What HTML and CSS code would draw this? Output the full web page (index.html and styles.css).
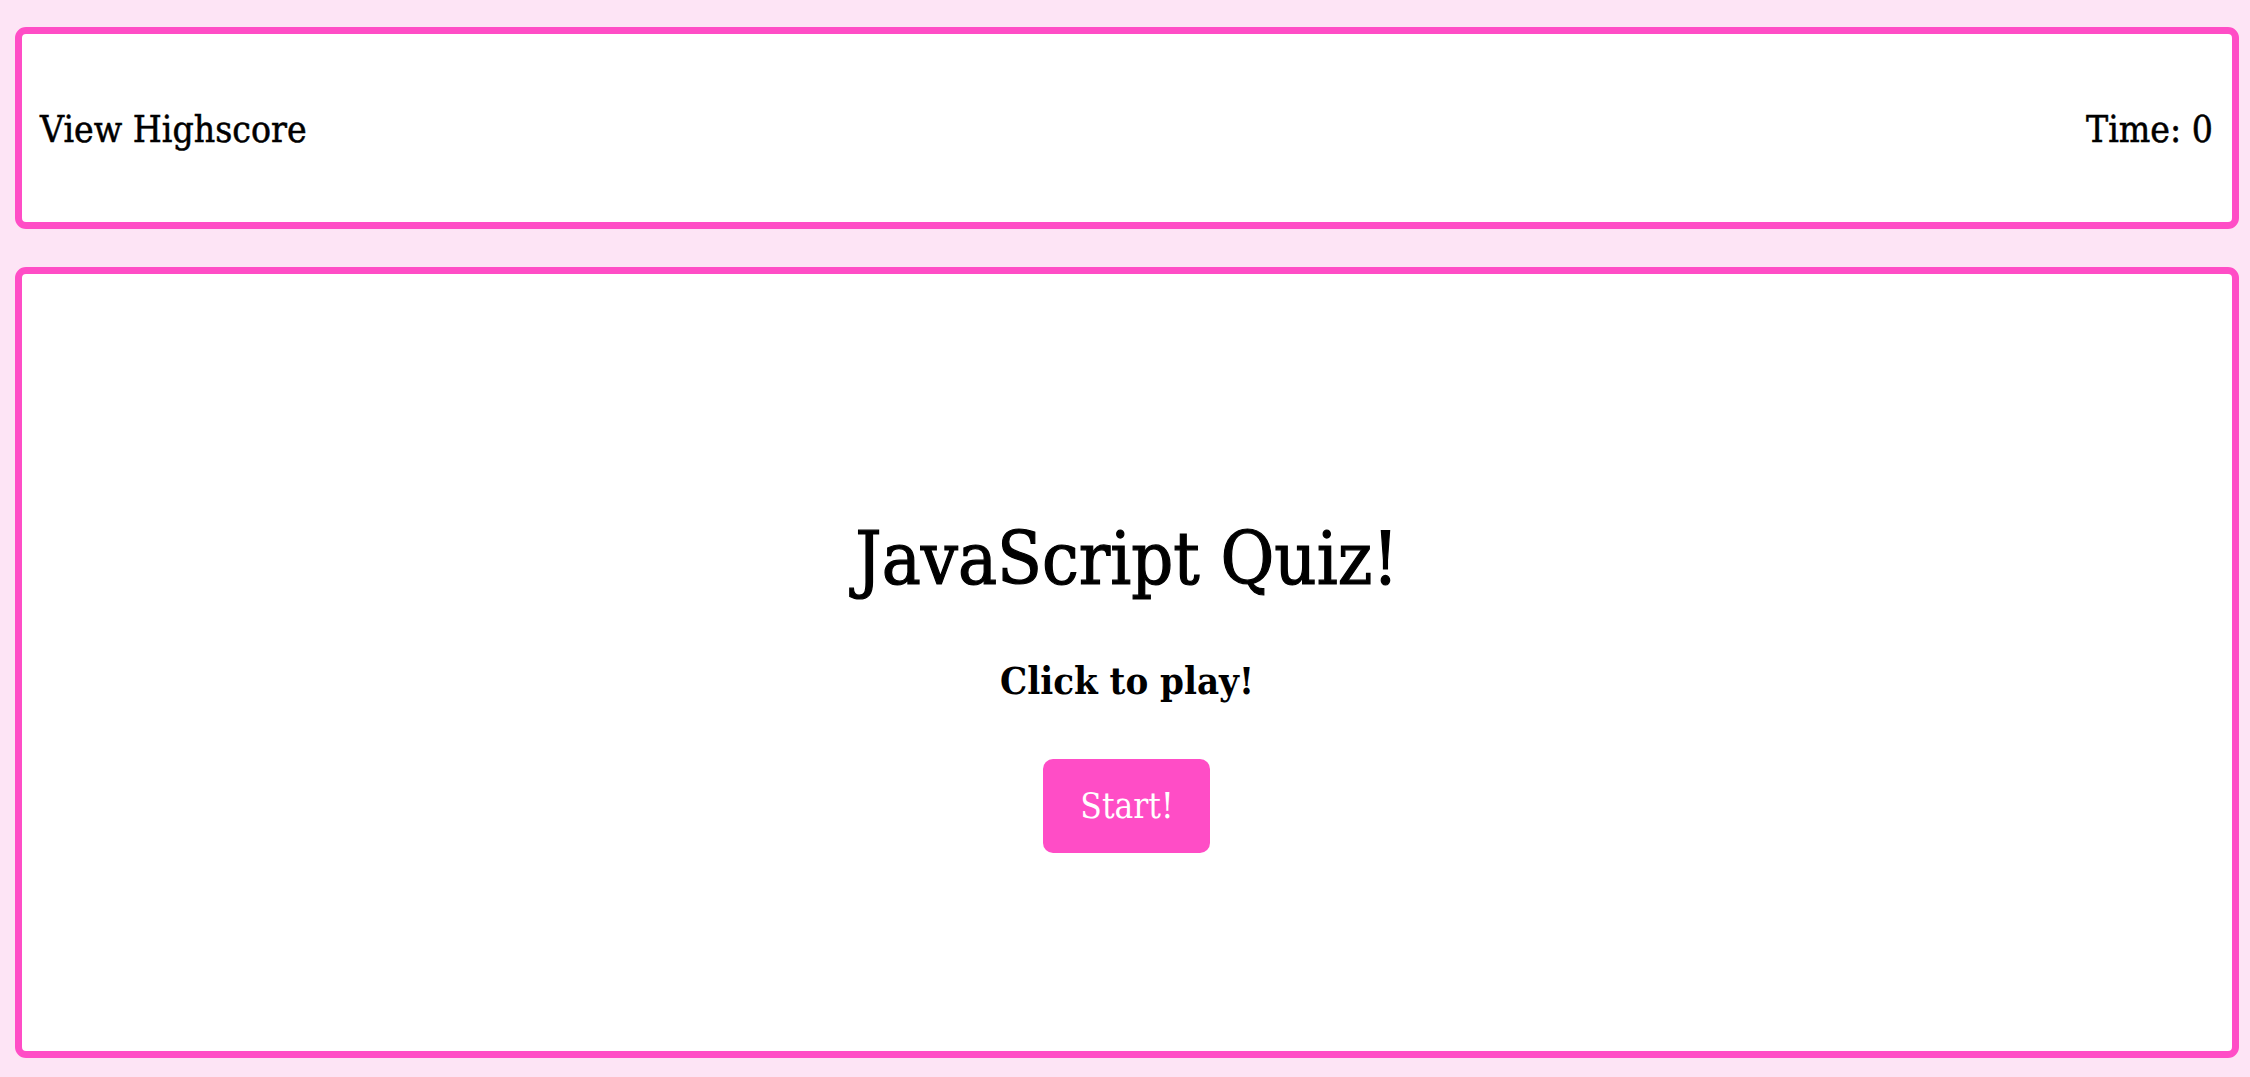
FILE: index.html
```html
<!DOCTYPE html>
<html lang="en">
<head>
<meta charset="utf-8">
<title>JavaScript Quiz</title>
<link rel="stylesheet" href="styles.css">
</head>
<body>
<div class="page">
  <header class="topbar">
    <a class="highscore">View Highscore</a>
    <span class="timer">Time: 0</span>
  </header>
  <main class="quiz">
    <div class="intro">
      <h1 class="title">JavaScript Quiz!</h1>
      <p class="subtitle">Click to play!</p>
      <button class="start">Start!</button>
    </div>
  </main>
</div>
</body>
</html>
```
FILE: styles.css
```css
html, body {
  margin: 0;
  padding: 0;
  height: 100%;
}
body {
  background: #fde4f5;
  font-family: "DejaVu Serif", "Liberation Serif", serif;
  font-stretch: condensed;
  color: #000;
}
.page {
  box-sizing: border-box;
  height: 1077px;
  padding: 27px 11px 19px 15px;
  display: flex;
  flex-direction: column;
  gap: 38px;
}
.topbar {
  box-sizing: border-box;
  height: 202px;
  background: #fff;
  border: 7px solid #ff4dc6;
  border-radius: 11px;
  display: flex;
  justify-content: space-between;
  align-items: center;
  padding: 0 19px 0 18px;
  font-size: 37px;
  line-height: 1.2;
  -webkit-text-stroke: 0.5px #000;
}
.highscore, .timer {
  position: relative;
  top: 2px;
}
.quiz {
  box-sizing: border-box;
  flex: 1;
  background: #fff;
  border: 7px solid #ff4dc6;
  border-radius: 11px;
  display: flex;
  justify-content: center;
  align-items: center;
}
.intro {
  display: flex;
  flex-direction: column;
  align-items: center;
  margin-top: 47px;
}
.title {
  margin: 0;
  font-size: 73px;
  font-weight: normal;
  line-height: 79px;
  -webkit-text-stroke: 1.2px #000;
}
.subtitle {
  margin: 61px 0 0;
  font-size: 38px;
  font-weight: bold;
  line-height: 43px;
}
.start {
  margin-top: 57px;
  width: 167px;
  height: 94px;
  border: none;
  border-radius: 10px;
  background: #ff4dc6;
  color: #fff;
  font-family: inherit;
  font-stretch: condensed;
  font-size: 35px;
  font-weight: normal;
  padding: 0;
}
```
